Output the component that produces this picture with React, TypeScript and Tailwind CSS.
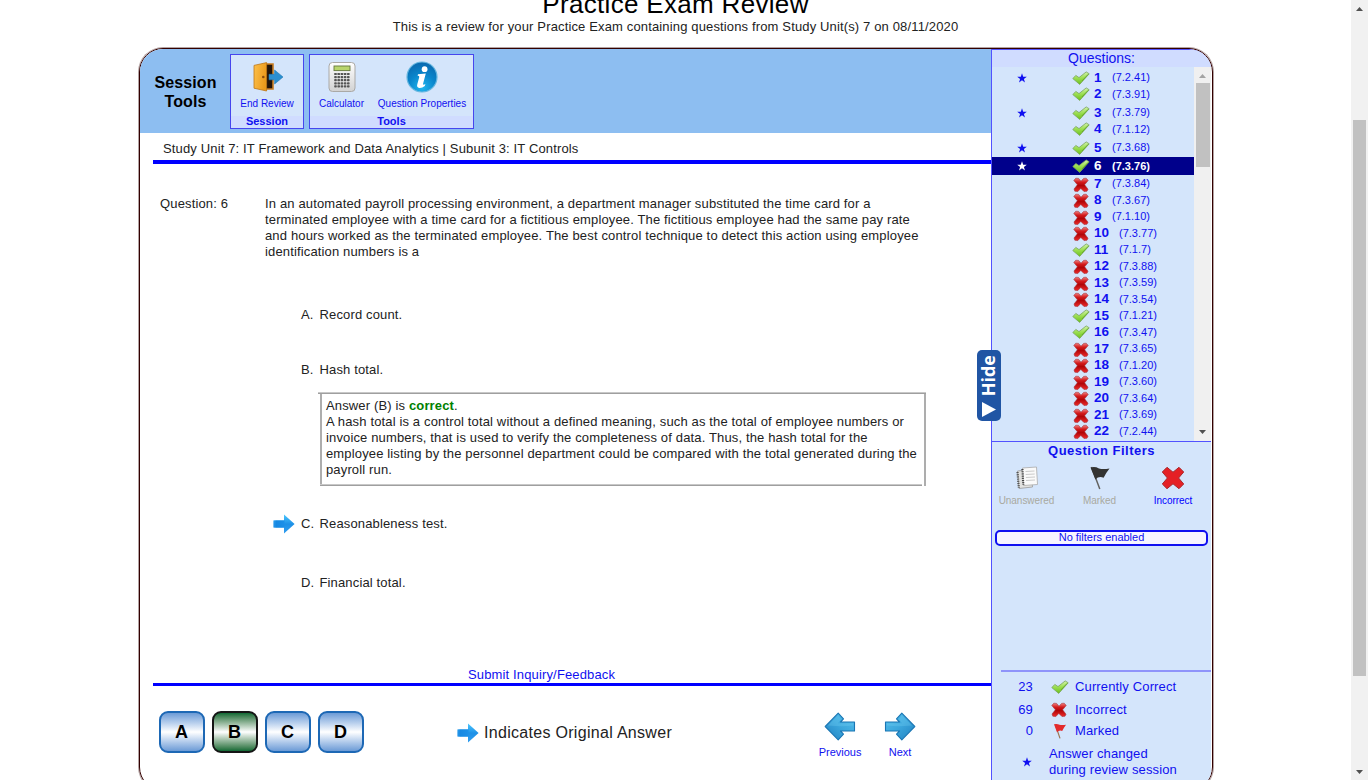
import React from "react";

type Question = { n: number; code: string; ok: boolean; star?: boolean };

const questions: Question[] = [
  { n: 1, code: "7.2.41", ok: true, star: true },
  { n: 2, code: "7.3.91", ok: true },
  { n: 3, code: "7.3.79", ok: true, star: true },
  { n: 4, code: "7.1.12", ok: true },
  { n: 5, code: "7.3.68", ok: true, star: true },
  { n: 6, code: "7.3.76", ok: true, star: true },
  { n: 7, code: "7.3.84", ok: false },
  { n: 8, code: "7.3.67", ok: false },
  { n: 9, code: "7.1.10", ok: false },
  { n: 10, code: "7.3.77", ok: false },
  { n: 11, code: "7.1.7", ok: true },
  { n: 12, code: "7.3.88", ok: false },
  { n: 13, code: "7.3.59", ok: false },
  { n: 14, code: "7.3.54", ok: false },
  { n: 15, code: "7.1.21", ok: true },
  { n: 16, code: "7.3.47", ok: true },
  { n: 17, code: "7.3.65", ok: false },
  { n: 18, code: "7.1.20", ok: false },
  { n: 19, code: "7.3.60", ok: false },
  { n: 20, code: "7.3.64", ok: false },
  { n: 21, code: "7.3.69", ok: false },
  { n: 22, code: "7.2.44", ok: false },
];

function Defs() {
  return (
    <svg width="0" height="0" className="absolute">
      <defs>
        <linearGradient id="gCheck" x1="0" y1="0" x2="0" y2="1">
          <stop offset="0" stopColor="#d2f2aa" />
          <stop offset="0.5" stopColor="#9ade50" />
          <stop offset="1" stopColor="#6cc01c" />
        </linearGradient>
        <linearGradient id="gRed" x1="0" y1="0" x2="0" y2="1">
          <stop offset="0" stopColor="#f08080" />
          <stop offset="0.3" stopColor="#d41a1c" />
          <stop offset="0.55" stopColor="#b00508" />
          <stop offset="1" stopColor="#ee2a2a" />
        </linearGradient>
        <linearGradient id="gSky" x1="0" y1="0" x2="0" y2="1">
          <stop offset="0" stopColor="#4cc8ff" />
          <stop offset="0.5" stopColor="#1e90e6" />
          <stop offset="1" stopColor="#2f9df0" />
        </linearGradient>
        <linearGradient id="gTail" x1="0" y1="0" x2="1" y2="0">
          <stop offset="0" stopColor="#2898ea" stopOpacity="0.45" />
          <stop offset="0.25" stopColor="#1688e2" />
          <stop offset="1" stopColor="#1c90e8" />
        </linearGradient>
        <linearGradient id="gNav" x1="0" y1="0" x2="1" y2="1">
          <stop offset="0" stopColor="#55c0ec" />
          <stop offset="0.5" stopColor="#3ba6dc" />
          <stop offset="1" stopColor="#2080c0" />
        </linearGradient>
        <linearGradient id="gDoor" x1="0" y1="0" x2="1" y2="0.3">
          <stop offset="0" stopColor="#fdc04a" />
          <stop offset="1" stopColor="#ea9a1c" />
        </linearGradient>
        <linearGradient id="gCalc" x1="0" y1="0" x2="0" y2="1">
          <stop offset="0" stopColor="#ffffff" />
          <stop offset="1" stopColor="#d2d2d2" />
        </linearGradient>
        <radialGradient id="gInfo" cx="0.5" cy="0.85" r="0.8">
          <stop offset="0" stopColor="#20b6ee" />
          <stop offset="0.55" stopColor="#0a86cc" />
          <stop offset="1" stopColor="#0a6cb2" />
        </radialGradient>
      </defs>
    </svg>
  );
}

function Check() {
  return (
    <svg width="18" height="14" viewBox="0 0 18 14" className="block">
      <path d="M.8 7.6 3.8 4.4 7 6.6 14.2 .9 17.2 2.8 7.7 13.4Z" fill="url(#gCheck)" stroke="#79a35f" strokeWidth="0.8" strokeLinejoin="round" />
      <path d="M10 9.9 16.2 3.3" fill="none" stroke="#58a01c" strokeWidth="0.8" />
    </svg>
  );
}

function Cross() {
  return (
    <svg width="17" height="18" viewBox="-1 -2 17 18" className="block">
      <path d="M.8 3.4 2.8 1.2 5.6 1.4 8 4.2 10.6 1.4 13.2 1.2 15.2 3.4 11.6 7.8 15 12.2 14 14.2 11 14.6 7.8 11.4 4.8 14.6 1.8 14.2 1 12 4.4 7.8Z" fill="url(#gRed)" stroke="#a4343a" strokeWidth="0.6" strokeLinejoin="round" />
    </svg>
  );
}

function Star({ className }: { className: string }) {
  return (
    <svg width="10" height="10" viewBox="0 0 10 10" className={className}>
      <path fill="currentColor" d="M5 .2 6.2 3.7H9.8L6.9 5.9 8 9.4 5 7.3 2 9.4 3.1 5.9.2 3.7H3.8Z" />
    </svg>
  );
}

function SmallArrow() {
  return (
    <svg width="22" height="20" viewBox="0 0 22 20" className="block">
      <path d="M.5 6.4H11V.6L21.6 10 11 19.6V13.6H.5Z" fill="url(#gSky)" />
      <path d="M.5 6.4H11.5V13.6H.5Z" fill="url(#gTail)" />
    </svg>
  );
}

function NavArrow({ flip = false }: { flip?: boolean }) {
  return (
    <svg width="32" height="29" viewBox="0 0 32 29" className={flip ? "block -scale-x-100" : "block"}>
      <path d="M1.5 10H15.5L12.5 6.8 17.8 1.2 30.8 14.5 17.8 27.8 12.5 22.2 15.5 19H1.5Z" fill="url(#gNav)" stroke="#1a76b4" strokeWidth="1.1" strokeLinejoin="round" />
      <path d="M2.7 11.2H18L15 7.2 17.8 3 28 13.5Q14 15 2.7 13.5Z" fill="#7fd6f7" opacity="0.25" />
    </svg>
  );
}

function DoorIcon() {
  return (
    <svg width="34" height="32" viewBox="-1 0 34 32">
      <path d="M14 3H22V28H14Z" fill="#221409" stroke="#c77c22" strokeWidth="1.6" />
      <path d="M3 4.4 15.6 1.6V30L3 27.2Z" fill="url(#gDoor)" stroke="#bd7618" strokeWidth="0.8" />
      <circle cx="12.3" cy="16" r="1.3" fill="#8a4c0c" />
      <path d="M18 13.3H23.6V9L32 16 23.6 23V18.8H18Z" fill="#2b8fd0" stroke="#2178b2" strokeWidth="0.6" />
    </svg>
  );
}

function CalcIcon() {
  return (
    <svg width="30" height="32" viewBox="0 0 30 32">
      <rect x="2" y="1.5" width="26" height="29" rx="3.5" fill="url(#gCalc)" stroke="#aaa9a6" />
      <rect x="7" y="5" width="16" height="4.6" fill="#b9d56c" stroke="#65783c" strokeWidth="0.9" />
      {[13, 16.1, 19.2, 22.3, 25.4].map((y) =>
        [8.4, 11.6, 14.8, 18, 21.2].map((x) => (
          <rect key={`${x}-${y}`} x={x - 1.2} y={y - 1.1} width="2.6" height="2.2" rx="0.7" fill="#555" />
        )),
      )}
    </svg>
  );
}

function InfoIcon() {
  return (
    <svg width="32" height="32" viewBox="0 0 32 32">
      <circle cx="16" cy="16" r="15" fill="url(#gInfo)" stroke="#65b6df" strokeWidth="1.2" />
      <circle cx="18.6" cy="8.2" r="2.9" fill="#fff" />
      <path d="M12 13.2 19.8 12.4 17 23Q17 24.5 19.4 23L18.8 25Q16 27.3 13.2 27Q10.4 26.4 11.3 23.3L13.2 16.2Q13.6 14.7 11.6 14.8Z" fill="#fff" />
    </svg>
  );
}

function PagesIcon() {
  return (
    <svg width="24" height="24" viewBox="0 0 24 24">
      <path d="M2.5 5 16 3.5 17.5 21 4 22.5Z" fill="#e2e2e0" stroke="#999" strokeWidth="0.8" />
      <path d="M7.5 2 21.5 1 22.5 18.5 8.5 19.5Z" fill="#fafafa" stroke="#aaa" strokeWidth="0.8" />
      <path d="M10.5 5.5 19.5 5M10.7 8.5 19.7 8M10.9 11.5 20 11M11 14.5 20 14" stroke="#c4c4c4" strokeWidth="0.9" />
      <path d="M7.4 3 8.3 19" stroke="#444" strokeWidth="2.2" strokeDasharray="1.1 1.1" />
      <path d="M2.5 6 3.8 22" stroke="#555" strokeWidth="2.2" strokeDasharray="1.1 1.1" />
    </svg>
  );
}

function BlackFlag() {
  return (
    <svg width="20" height="24" viewBox="1 0 20 24">
      <path d="M2.5 1 10.8 23" stroke="#62625f" strokeWidth="1.5" />
      <path d="M1.5 1.5Q6 .2 10 2.4 14 3.8 20.5 2.4 17.5 6 14.6 11.8 10 9.8 6.4 13.4Z" fill="#333332" />
    </svg>
  );
}

function FilterCross() {
  return (
    <svg width="24" height="24" viewBox="0 0 24 24">
      <path d="M1.3 6 6 1.3 12 6.2 18 1.3 22.7 6 17.6 12 22.7 18 18 22.7 12 17.8 6 22.7 1.3 18 6.4 12Z" fill="#e52025" stroke="#aa272a" strokeWidth="1" strokeLinejoin="round" />
    </svg>
  );
}

function RedFlag() {
  return (
    <svg width="14" height="16" viewBox="0 0 14 16" className="block">
      <path d="M2.3 1.5 7 15.4" stroke="#9a7653" strokeWidth="1.2" />
      <path d="M1 1.3Q4 .5 6.5 1.7 9 2.5 13 1.7 11 4.4 9.2 8 6.2 6.8 4 9.2Z" fill="#e32a2c" />
    </svg>
  );
}

function Tool({ icon, label, className }: { icon: React.ReactNode; label: string; className: string }) {
  return (
    <div className={`flex flex-col items-center ${className}`}>
      <div className="flex h-8 items-center">{icon}</div>
      <span className="mt-[4px] text-[10px] leading-[14px]">{label}</span>
    </div>
  );
}

function Choice({ letter, text, className, original = false }: { letter: string; text: string; className: string; original?: boolean }) {
  return (
    <div className={`flex h-5 items-center leading-4 ${className}`}>
      <span className="w-7">{original && <SmallArrow />}</span>
      <span className="w-[18.5px]">{letter}.</span>
      <span>{text}</span>
    </div>
  );
}

function AnswerButton({ letter, selected = false }: { letter: string; selected?: boolean }) {
  return (
    <button
      className={
        "flex h-[42px] w-[46px] items-center justify-center rounded-[9px] border-2 pr-px text-[18px] font-bold text-black " +
        (selected
          ? "border-[#151515] bg-linear-to-b from-[#0b6a35] via-white to-[#0b6a35]"
          : "border-[#1d68b5] bg-linear-to-b from-[#6c9bd6] via-white to-[#6c9bd6]")
      }
    >
      {letter}
    </button>
  );
}

function Sidebar() {
  return (
    <aside className="relative flex w-[220px] shrink-0 flex-col rounded-tr-[22px] border-l border-t border-[#5252ff] bg-[#d4e5fb] text-[#1010f0]">
      <div className="h-[17px] rounded-tr-[20px] bg-[#d0dcff] text-center text-[14px] leading-4 tracking-normal">Questions:</div>
      <div className="flex h-[375px] border-b border-[#5252ff] tracking-normal">
        <div className="w-[202px] overflow-hidden pt-[1.4px]">
          {questions.map((q) => (
            <div
              key={q.n}
              className={
                "flex items-center pl-[25px] " +
                (q.star ? "h-[18.5px] " : "h-[16.5px] ") +
                (q.n === 2 || q.n === 4 ? "pb-[2px] " : "") +
                (q.n === 6 ? "bg-[#00008b] font-bold text-white" : "")
              }
            >
              <span className="w-[55px]">{q.star && <Star className="block" />}</span>
              <span className="w-[22px]">{q.ok ? <Check /> : <Cross />}</span>
              <span className={q.n > 9 ? "w-[25px] text-[13.5px] font-bold" : "w-[18px] text-[13.5px] font-bold"}>{q.n}</span>
              <span className="text-[11px]">({q.code})</span>
            </div>
          ))}
        </div>
        <div className="flex grow flex-col items-center bg-[#f0f0f0]">
          <svg width="7" height="4" viewBox="0 0 7 4" className="mt-[7px]"><path d="M0 4 3.5 0 7 4Z" fill="#a3a3a3" /></svg>
          <div className="mt-[5px] h-[84px] w-[14px] bg-[#c1c1c1]" />
          <svg width="7" height="4" viewBox="0 0 7 4" className="mb-[7px] mt-auto"><path d="M0 0 3.5 4 7 0Z" fill="#505050" /></svg>
        </div>
      </div>
      <div className="h-[24px] text-center text-[13px] font-bold leading-[17px] tracking-[0.5px]">Question Filters</div>
      <div className="flex text-[10px] leading-3 tracking-[-0.05px]">
        <div className="flex w-[69px] flex-col items-center gap-[5px] text-[#a9a9a0]"><PagesIcon />Unanswered</div>
        <div className="flex w-[77px] flex-col items-center gap-[5px] text-[#a9a9a0]"><BlackFlag />Marked</div>
        <div className="flex w-[70px] flex-col items-center gap-[5px] text-[#0000ff]"><FilterCross />Incorrect</div>
      </div>
      <div className="ml-[3px] mt-[23px] h-4 w-[213px] rounded-[5px] border-2 border-[#1010f0] bg-[#f7f5ff] text-center text-[11px] leading-[11px] tracking-normal">
        No filters enabled
      </div>
      <div className="ml-[9px] mt-[124px] h-[2px] bg-[#8f94fa]" />
      <div className="text-[13px] leading-4 tracking-[0.14px]">
        <div className="flex h-[23px] items-end">
          <span className="w-[41px] text-right">23</span><span className="ml-[18px] w-6 pb-px"><Check /></span>Currently Correct
        </div>
        <div className="flex h-[23px] items-end">
          <span className="w-[41px] text-right">69</span><span className="ml-[17px] w-[25px]"><Cross /></span>Incorrect
        </div>
        <div className="flex h-[21px] items-end">
          <span className="w-[41px] text-right">0</span><span className="ml-[20px] w-[22px]"><RedFlag /></span>Marked
        </div>
        <div className="mt-[7px] flex items-center">
          <Star className="ml-[30px] mr-[17px]" />
          <span>Answer changed<br />during review session</span>
        </div>
      </div>
      <button className="absolute -left-[15px] top-[300px] flex h-[71px] w-6 flex-col items-center justify-between rounded-[5px] bg-[#2055a4] pb-[4px] pt-[5px] text-white">
        <span className="-ml-[2px] rotate-180 font-['Open_Sans',sans-serif] text-[18px] font-bold leading-6 tracking-normal [writing-mode:vertical-rl]">Hide</span>
        <svg width="14" height="15" viewBox="0 0 14 15"><path d="M0 0 14 7.5 0 15Z" fill="#fff" /></svg>
      </button>
    </aside>
  );
}

export default function App() {
  return (
    <div className="flex h-[780px] w-[1368px] overflow-hidden bg-white font-['Liberation_Sans',Arial,sans-serif] text-[13px] tracking-[0.145px] text-[#222]">
      <Defs />
      <div className="w-[1351px]">
        <h1 className="-mt-[10px] h-[28px] text-center text-[26px] leading-[29px] tracking-[0.32px] text-black">Practice Exam Review</h1>
        <p className="h-[30px] pt-px text-center leading-4">
          This is a review for your Practice Exam containing questions from Study Unit(s) 7 on 08/11/2020
        </p>
        <div className="ml-[139px] flex h-[743px] w-[1074px] overflow-hidden rounded-[24px] border border-[#330000] shadow-[0_0_0_1px_#b3a3a3]">
          <main className="w-[851px] shrink-0">
            <header className="flex h-[84px] bg-[#8dbef1] pt-[5px] tracking-normal text-[#1010f0]">
              <div className="w-[90px] pl-px pt-[19px] text-center text-[16px] font-bold leading-[19px] tracking-[0.1px] text-black">Session<br />Tools</div>
              <div className="flex h-[75px] w-[74px] flex-col border border-[#4646ee] bg-[#d4e5fb]">
                <div className="flex grow justify-center pt-[6px]"><Tool className="w-[72px]" icon={<DoorIcon />} label="End Review" /></div>
                <div className="h-3 bg-[#d0dcff] text-center text-[11px] font-bold leading-[11px]">Session</div>
              </div>
              <div className="ml-[5px] flex h-[75px] w-[165px] flex-col border border-[#4646ee] bg-[#d4e5fb]">
                <div className="flex grow pt-[6px]">
                  <Tool className="w-[63px]" icon={<CalcIcon />} label="Calculator" />
                  <Tool className="w-[98px]" icon={<InfoIcon />} label="Question Properties" />
                </div>
                <div className="h-3 bg-[#d0dcff] text-center text-[11px] font-bold leading-[11px]">Tools</div>
              </div>
            </header>
            <div className="ml-[13px] h-[31px] border-b-4 border-[#0000ff] pl-[10px] pt-[8px] leading-4">
              Study Unit 7: IT Framework and Data Analytics | Subunit 3: IT Controls
            </div>
            <div className="flex h-[503px] pl-5 pt-[32px] leading-4">
              <div className="w-[105px]">Question: 6</div>
              <div>
                <p className="whitespace-nowrap">
                  In an automated payroll processing environment, a department manager substituted the time card for a<br />
                  terminated employee with a time card for a fictitious employee. The fictitious employee had the same pay rate<br />
                  and hours worked as the terminated employee. The best control technique to detect this action using employee<br />
                  identification numbers is a
                </p>
                <div className="-mt-px flex flex-col pl-[8px]">
                  <Choice letter="A" text="Record count." className="mt-[46px]" />
                  <Choice letter="B" text="Hash total." className="mt-[35px]" />
                  <div className="ml-[45px] mt-[12px] flex h-[94px] w-[608px] flex-col whitespace-nowrap">
                    <div className="h-[2px] border-t border-[#c8c8c8] bg-[#9f9f9f]" />
                    <div className="ml-[2px] h-[90px] border-x-2 border-[#adadad] pl-[4px] pt-[4px]">
                      Answer (B) is <b className="text-[#008000]">correct</b>.<br />
                      A hash total is a control total without a defined meaning, such as the total of employee numbers or<br />
                      invoice numbers, that is used to verify the completeness of data. Thus, the hash total for the<br />
                      employee listing by the personnel department could be compared with the total generated during the<br />
                      payroll run.
                    </div>
                    <div className="ml-[2px] flex h-[2px] justify-between">
                      <div className="w-[602px] border-t border-[#c8c8c8] bg-[#9f9f9f]" />
                      <div className="w-[2px] bg-[#adadad]" />
                    </div>
                  </div>
                  <Choice letter="C" text="Reasonableness test." className="mt-[28px]" original />
                  <Choice letter="D" text="Financial total." className="mt-[39px]" />
                </div>
              </div>
            </div>
            <div className="ml-[13px] border-b-[3px] border-[#0000ff]">
              <div className="ml-[315px] h-4 leading-4 text-[#1010f0]">Submit Inquiry/Feedback</div>
            </div>
            <footer className="flex pl-[19px] pt-[25px]">
              <div className="flex gap-[7px]">
                <AnswerButton letter="A" />
                <AnswerButton letter="B" selected />
                <AnswerButton letter="C" />
                <AnswerButton letter="D" />
              </div>
              <div className="ml-[93px] flex h-[43px] items-center gap-[5px] text-[16px] tracking-[0.3px]"><SmallArrow />Indicates Original Answer</div>
              <div className="ml-[138px] flex pt-px text-[11px] leading-4 tracking-normal text-[#1010f0]">
                <div className="flex w-[60px] flex-col items-center gap-[3px]"><NavArrow flip />Previous</div>
                <div className="flex w-[60px] flex-col items-center gap-[3px]"><NavArrow />Next</div>
              </div>
            </footer>
          </main>
          <Sidebar />
        </div>
      </div>
      <div className="flex w-[17px] flex-col items-center bg-[#f1f1f1]">
        <svg width="7" height="4" viewBox="0 0 7 4" className="mt-[7px]"><path d="M0 4 3.5 0 7 4Z" fill="#505050" /></svg>
        <div className="mt-[109px] h-[556px] w-[13px] bg-[#c1c1c1]" />
        <svg width="7" height="4" viewBox="0 0 7 4" className="mb-[6px] mt-auto"><path d="M0 0 3.5 4 7 0Z" fill="#505050" /></svg>
      </div>
    </div>
  );
}
